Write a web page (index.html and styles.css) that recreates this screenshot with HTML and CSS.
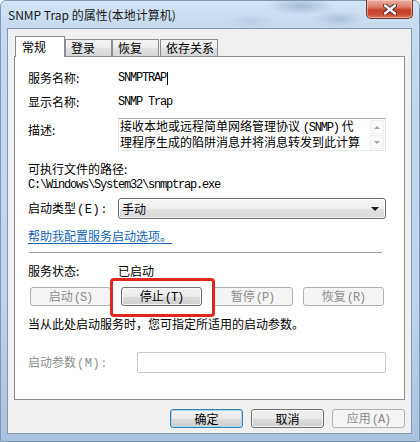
FILE: index.html
```html
<!DOCTYPE html>
<html lang="zh-CN">
<head>
<meta charset="utf-8">
<title>SNMP Trap 的属性(本地计算机)</title>
<link rel="stylesheet" href="styles.css">
</head>
<body>
<div class="window">
  <div class="titlebar">
    <span class="title">SNMP Trap 的属性(本地计算机)</span>
    <button class="close" aria-label="关闭">
      <svg width="14" height="11" viewBox="0 0 14 11">
        <path d="M2 1.5 L12 9.5 M12 1.5 L2 9.5" stroke="#4a2a26" stroke-width="4.2" stroke-linecap="round"/>
        <path d="M2 1.5 L12 9.5 M12 1.5 L2 9.5" stroke="#fff" stroke-width="2.4" stroke-linecap="round"/>
      </svg>
    </button>
  </div>

  <div class="client">
    <div class="tabs">
      <div class="tab active">常规</div>
      <div class="tab t-login">登录</div>
      <div class="tab t-recover">恢复</div>
      <div class="tab t-deps">依存关系</div>
    </div>

    <div class="panel">
      <div class="row">
        <span class="lbl">服务名称:</span>
        <span class="mono">SNMPTRAP</span><span class="caret"></span>
      </div>
      <div class="row r-display">
        <span class="lbl">显示名称:</span>
        <span class="mono">SNMP Trap</span>
      </div>
      <div class="row r-desc">
        <span class="lbl lbl-top">描述:</span>
        <div class="memo">
          <div class="memo-text">
            <div class="line">接收本地或远程简单网络管理协议 <span class="mono">(SNMP)</span> 代</div>
            <div class="line">理程序生成的陷阱消息并将消息转发到此计算</div>
          </div>
          <div class="scroll">
            <span class="sbtn"><i class="tri up"></i></span>
            <span class="sbtn"><i class="tri down"></i></span>
          </div>
        </div>
      </div>
      <div class="row r-path-label">可执行文件的路径:</div>
      <div class="row mono">C:\Windows\System32\snmptrap.exe</div>
      <div class="row r-startup">
        <span class="lbl">启动类型<span class="mk">(E)</span>:</span>
        <div class="combo">
          <span>手动</span>
          <i class="tri down dark"></i>
        </div>
      </div>
      <div class="row r-link"><a class="link" href="#">帮助我配置服务启动选项。</a></div>
      <div class="sep"></div>
      <div class="row r-status">
        <span class="lbl">服务状态:</span>
        <span>已启动</span>
      </div>
      <div class="btnrow">
        <button class="btn" disabled>启动<span class="mk">(S)</span></button>
        <button class="btn">停止<span class="mk">(T)</span></button>
        <button class="btn" disabled>暂停<span class="mk">(P)</span></button>
        <button class="btn" disabled>恢复<span class="mk">(R)</span></button>
        <div class="mark"></div>
      </div>
      <div class="row r-note">当从此处启动服务时，您可指定所适用的启动参数。</div>
      <div class="row r-param">
        <span class="lbl lbl-wide disabled-text">启动参数<span class="mk">(M)</span>:</span>
        <div class="field"></div>
      </div>
    </div>

    <div class="actions">
      <button class="btn btn-main default">确定</button>
      <button class="btn btn-main">取消</button>
      <button class="btn btn-main" disabled>应用<span class="mk">(A)</span></button>
    </div>
  </div>
</div>
</body>
</html>
```

FILE: styles.css
```css
* {
  box-sizing: border-box;
}

html,
body {
  margin: 0;
  padding: 0;
}

body {
  width: 420px;
  height: 442px;
  overflow: hidden;
  font-family: "Noto Sans CJK SC", "Noto Sans", sans-serif;
  font-size: 12px;
  color: #000;
  background: #fff;
}

/* ---------- window frame ---------- */
.window {
  width: 420px;
  height: 442px;
  display: flex;
  flex-direction: column;
  padding: 0 7px 7px 6px;
  border: 1px solid #7e98b4;
  border-radius: 6px 6px 0 0;
  background:
    radial-gradient(ellipse 34px 9px at 300px 5px, rgba(112, 142, 178, 0.45), transparent),
    radial-gradient(ellipse 26px 8px at 338px 18px, rgba(112, 142, 178, 0.35), transparent),
    radial-gradient(ellipse 22px 7px at 250px 20px, rgba(140, 166, 198, 0.3), transparent),
    linear-gradient(180deg, #d3e3f4 0, #c6d9ee 28px, #bfd4eb 300px, #a9c2de 442px);
}

.titlebar {
  height: 27px;
  display: flex;
  align-items: flex-start;
  flex: none;
}

.title {
  margin: 6px 0 0 1px;
  line-height: 16px;
  font-size: 12px;
  color: #1a1a1a;
}

.close {
  margin: -1px -1px 0 auto;
  width: 47px;
  height: 19px;
  padding: 0;
  border: 1px solid #6b3a36;
  border-top: none;
  border-radius: 0 0 5px 5px;
  background: linear-gradient(180deg, #eab3a6 0, #dc7a64 40%, #c6412a 55%, #c94a30 80%, #d97b62 100%);
  box-shadow: inset 0 0 0 1px rgba(255, 210, 200, 0.55);
  display: flex;
  align-items: center;
  justify-content: center;
}

.close svg {
  display: block;
}

/* ---------- client area ---------- */
.client {
  flex: 1;
  display: flex;
  flex-direction: column;
  padding: 0 6px;
  border: 1px solid #8497ad;
  background: #f0f0f0;
}

.tabs {
  margin-top: 7px;
  height: 20px;
  display: flex;
  align-items: flex-end;
  padding-left: 1px;
  flex: none;
}

.tab {
  height: 17px;
  padding-left: 5px;
  line-height: 16px;
  border: 1px solid #898c95;
  border-bottom: none;
  background: linear-gradient(180deg, #f4f4f4 0, #ececec 50%, #e1e1e1 50%, #d6d6d6 100%);
  white-space: nowrap;
}

.tab.active {
  position: relative;
  z-index: 1;
  width: 50px;
  height: 21px;
  margin-bottom: -1px;
  padding: 2px 0 0 6px;
  background: #fff;
}

.t-login {
  width: 47px;
}

.t-recover {
  width: 47px;
}

.t-deps {
  width: 58px;
  margin-left: 1px;
}

.panel {
  height: 344px;
  flex: none;
  padding: 13px 18px 0 13px;
  border: 1px solid #898c95;
  background: #fff;
}

/* ---------- form rows ---------- */
.row {
  display: flex;
  align-items: center;
  height: 16px;
  line-height: 16px;
  white-space: nowrap;
}

.lbl {
  width: 90px;
  flex: none;
}

.lbl-wide {
  width: 109px;
}

.lbl-top {
  align-self: flex-start;
  margin-top: 4px;
}

.r-display {
  margin-top: 8px;
}

.r-desc {
  margin-top: 8px;
  height: 33px;
  align-items: flex-start;
}

.r-path-label {
  margin-top: 10px;
}

.r-startup {
  margin-top: 5px;
  height: 21px;
}

.r-link {
  margin-top: 9px;
}

.r-status {
  margin-top: 10px;
}

.r-note {
  margin-top: 10px;
}

.r-param {
  margin-top: 20px;
  height: 21px;
}

.mono {
  font-family: "Liberation Mono", "DejaVu Sans Mono", monospace;
  font-size: 12px;
  letter-spacing: -1.2px;
}

.mk {
  font-family: "Liberation Mono", "DejaVu Sans Mono", monospace;
  font-size: 12px;
  letter-spacing: -1px;
  margin-left: 1px;
}

.lbl .mk {
  letter-spacing: 0.5px;
  margin-right: 2px;
}

.caret {
  display: inline-block;
  width: 1px;
  height: 13px;
  margin-left: 1px;
  background: #000;
}

.disabled-text {
  color: #8d8d8d;
}

/* description memo */
.memo {
  width: 268px;
  height: 33px;
  display: flex;
  border: 1px solid;
  border-color: #abadb3 #dbdfe6 #e3e9ef #e2e3ea;
  background: #fff;
}

.memo-text {
  flex: 1;
  padding: 0 0 0 1px;
  line-height: 13px;
}

.line {
  white-space: nowrap;
}

.scroll {
  width: 15px;
  flex: none;
  display: flex;
  flex-direction: column;
  gap: 1px;
  padding: 1px 1px 0 0;
}

.sbtn {
  height: 14px;
  display: flex;
  align-items: center;
  justify-content: center;
  border: 1px solid #eef0f3;
  background: #fafafa;
}

.tri {
  display: block;
  width: 0;
  height: 0;
  border-left: 3px solid transparent;
  border-right: 3px solid transparent;
}

.tri.up {
  border-bottom: 3px solid #a4a7ab;
}

.tri.down {
  border-top: 3px solid #a4a7ab;
}

.tri.dark {
  border-left-width: 4px;
  border-right-width: 4px;
  border-top: 4px solid #1a1a1a;
}

/* combo box */
.combo {
  width: 268px;
  height: 21px;
  display: flex;
  align-items: center;
  justify-content: space-between;
  padding: 0 6px 0 3px;
  border: 1px solid #707070;
  border-radius: 3px;
  background: linear-gradient(180deg, #f6f6f6 0, #eeeeee 50%, #e3e3e3 50%, #d9d9d9 100%);
  box-shadow: inset 0 0 0 1px rgba(255, 255, 255, 0.7);
}

/* help link */
.link {
  color: #1466b8;
  text-decoration: underline;
  text-underline-offset: 2px;
}

.sep {
  height: 1px;
  margin: 8px 4px 0 1px;
  background: #a0a0a0;
}

/* push buttons */
.btn {
  height: 19px;
  padding: 0;
  font-family: "Noto Sans CJK SC", sans-serif;
  font-size: 12px;
  line-height: 16px;
  color: #000;
  border: 1px solid #707070;
  border-radius: 3px;
  background: linear-gradient(180deg, #f2f2f2 0, #ebebeb 50%, #dddddd 50%, #cfcfcf 100%);
  box-shadow: inset 0 0 0 1px rgba(255, 255, 255, 0.75);
  white-space: nowrap;
}

.btn:disabled {
  color: #8d8d8d;
  border-color: #adb2b5;
  background: #f4f4f4;
  box-shadow: none;
}

.btnrow {
  position: relative;
  margin-top: 8px;
  padding-left: 2px;
  display: flex;
  gap: 10px;
}

.btnrow .btn {
  width: 81px;
}

/* red highlight around the stop button */
.mark {
  position: absolute;
  left: 82px;
  top: -9px;
  width: 105px;
  height: 39px;
  border: 3px solid #e1261f;
  border-radius: 4px;
  pointer-events: none;
}

/* disabled edit field */
.field {
  width: 249px;
  height: 21px;
  border: 1px solid #c9cbd0;
  border-radius: 2px;
  background: #fff;
}

/* dialog buttons */
.actions {
  margin-top: 9px;
  display: flex;
  justify-content: flex-end;
  gap: 8px;
  flex: none;
}

.btn-main {
  width: 73px;
}

.btn.default {
  border-color: #3c7fb1;
  box-shadow: inset 0 0 0 1px #9edcf6;
}
```
